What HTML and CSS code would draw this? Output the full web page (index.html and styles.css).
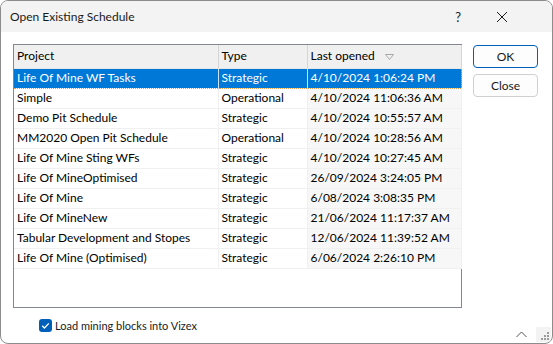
FILE: index.html
```html
<!DOCTYPE html>
<html>
  <head>
    <link rel="stylesheet" href="styles.css">
  </head>
  <body>
    <div class="window">
      <div class="titlebar">
        <span class="title">Open Existing Schedule</span>
        <span class="help">?</span>
        <svg class="close" width="12" height="12" viewBox="0 0 12 12">
          <path d="M1 1 L11 11 M11 1 L1 11" stroke="#1a1a1a" stroke-width="1" fill="none" />
        </svg>
      </div>
      <div class="content">
        <div class="list">
          <table>
            <colgroup>
              <col class="colProject" />
              <col class="colType" />
              <col class="colDate" />
            </colgroup>
            <tr>
              <th>Project</th>
              <th>Type</th>
              <th class="sorted">
                Last opened
                <svg class="sortGlyph" width="9" height="6" viewBox="0 0 9 6">
                  <path d="M0.5 0.5 L8.5 0.5 L4.5 5.5 Z" stroke="#a8a8a8" fill="none" />
                </svg>
              </th>
            </tr>
            <tbody id="rows"></tbody>
          </table>
        </div>
        <div class="buttons">
          <button class="default">OK</button>
          <button>Close</button>
        </div>
      </div>
      <div class="bottom">
        <label class="check">
          <span class="box">
            <svg width="13" height="13" viewBox="0 0 13 13">
              <path d="M3.2 6.8 L5.4 9 L9.8 4.4" stroke="#fff" stroke-width="1.3" fill="none" />
            </svg>
          </span>
          Load mining blocks into Vizex
        </label>
        <svg class="chevron" width="11" height="7" viewBox="0 0 11 7">
          <path d="M0.5 6 L5.5 1 L10.5 6" stroke="#555" stroke-width="1" fill="none" />
        </svg>
        <span class="grip">
          <svg width="12" height="12" viewBox="0 0 12 12">
            <rect x="8" y="2" width="2" height="2" fill="#9a9a9a" />
            <rect x="5" y="5" width="2" height="2" fill="#9a9a9a" />
            <rect x="8" y="5" width="2" height="2" fill="#9a9a9a" />
            <rect x="2" y="8" width="2" height="2" fill="#9a9a9a" />
            <rect x="5" y="8" width="2" height="2" fill="#9a9a9a" />
            <rect x="8" y="8" width="2" height="2" fill="#9a9a9a" />
          </svg>
        </span>
      </div>
    </div>

    <script>
      const schedules = [
        ['Life Of Mine WF Tasks', 'Strategic', '4/10/2024 1:06:24 PM'],
        ['Simple', 'Operational', '4/10/2024 11:06:36 AM'],
        ['Demo Pit Schedule', 'Strategic', '4/10/2024 10:55:57 AM'],
        ['MM2020 Open Pit Schedule', 'Operational', '4/10/2024 10:28:56 AM'],
        ['Life Of Mine Sting WFs', 'Strategic', '4/10/2024 10:27:45 AM'],
        ['Life Of MineOptimised', 'Strategic', '26/09/2024 3:24:05 PM'],
        ['Life Of Mine', 'Strategic', '6/08/2024 3:08:35 PM'],
        ['Life Of MineNew', 'Strategic', '21/06/2024 11:17:37 AM'],
        ['Tabular Development and Stopes', 'Strategic', '12/06/2024 11:39:52 AM'],
        ['Life Of Mine (Optimised)', 'Strategic', '6/06/2024 2:26:10 PM'],
      ];

      const rowsEl = document.getElementById('rows');
      schedules.forEach((s, i) => {
        const rowEl = rowsEl.insertRow(-1);
        if (i === 0) rowEl.className = 'selected';
        s.forEach((text, c) => {
          const cell = rowEl.insertCell(-1);
          cell.textContent = text;
          if (c === 2) cell.className = 'sorted';
        });
      });
    </script>
  </body>
</html>
```

FILE: styles.css
```css
html,
body {
  margin: 0;
  width: 553px;
  height: 344px;
  background: #fff;
  overflow: hidden;
}

.window {
  box-sizing: border-box;
  width: 553px;
  height: 344px;
  border: 1px solid #8c8c8c;
  border-radius: 8px;
  overflow: hidden;
  display: flex;
  flex-direction: column;
  font-family: Lato, "Liberation Sans", sans-serif;
  font-size: 12px;
  color: #000;
}

.titlebar {
  box-sizing: border-box;
  height: 31px;
  background: #f3f3f3;
  display: flex;
  align-items: center;
  padding-left: 9px;
  flex-shrink: 0;
}
.title {
  flex: 1;
  color: #1a1a1a;
}
.help {
  font-size: 13px;
  margin-right: 35px;
  color: #1a1a1a;
}
.close {
  margin-right: 44px;
}

.content {
  display: flex;
  padding: 12px 14px 0 12px;
  gap: 11px;
  flex-shrink: 0;
}

.list {
  box-sizing: border-box;
  width: 449px;
  height: 264px;
  border: 1px solid #828790;
  background: #fff;
}
table {
  border-collapse: collapse;
  table-layout: fixed;
  width: 447px;
  font-size: inherit;
}
.colProject {
  width: 204px;
}
.colType {
  width: 89px;
}
.colDate {
  width: 154px;
}
th,
td {
  box-sizing: border-box;
  text-align: left;
  font-weight: normal;
  white-space: nowrap;
  overflow: hidden;
  padding: 0 0 0 3px;
  height: 20px;
  line-height: 18px;
  border-right: 1px solid #f0f0f0;
  border-bottom: 1px solid #f0f0f0;
}
th {
  background: #f0f0f0;
  height: 23px;
  padding-bottom: 1px;
  border-right: 1px solid #d5d5d5;
  border-bottom: 1px solid #e5e5e5;
}
td.sorted {
  background: #f7f7f7;
}
.sortGlyph {
  margin-left: 7px;
  vertical-align: middle;
}
tr.selected td {
  background: #0078d7;
  color: #fff;
  border-top: 1px dotted #e8a050;
  border-bottom: 1px dotted #e8a050;
  border-right-color: #cce4f7;
}
tr.selected td:last-child {
  border-right: 1px dotted #e8a050;
}

.buttons {
  display: flex;
  flex-direction: column;
  gap: 6px;
  padding-top: 1px;
}
button {
  width: 65px;
  height: 23px;
  font-family: Lato, "Liberation Sans", sans-serif;
  font-size: 12px;
  color: #1a1a1a;
  background: #fdfdfd;
  border: 1px solid #d0d0d0;
  border-radius: 4px;
  padding: 0;
}
button.default {
  border: 1px solid #005fb8;
}

.bottom {
  flex: 1;
  display: flex;
  align-items: flex-end;
  padding: 0 1px 1px 38px;
}
.check {
  flex: 1;
  display: flex;
  align-items: center;
  margin-bottom: 10px;
  font-size: 11px;
  color: #1a1a1a;
}
.box {
  width: 13px;
  height: 13px;
  border-radius: 3px;
  background: #005fb8;
  margin-right: 3px;
  display: flex;
}
.chevron {
  margin: 0 9px 4px 0;
}
.grip {
  width: 15px;
  height: 15px;
  background: #f3f3f3;
  display: flex;
  align-items: flex-end;
  justify-content: flex-end;
}
```
